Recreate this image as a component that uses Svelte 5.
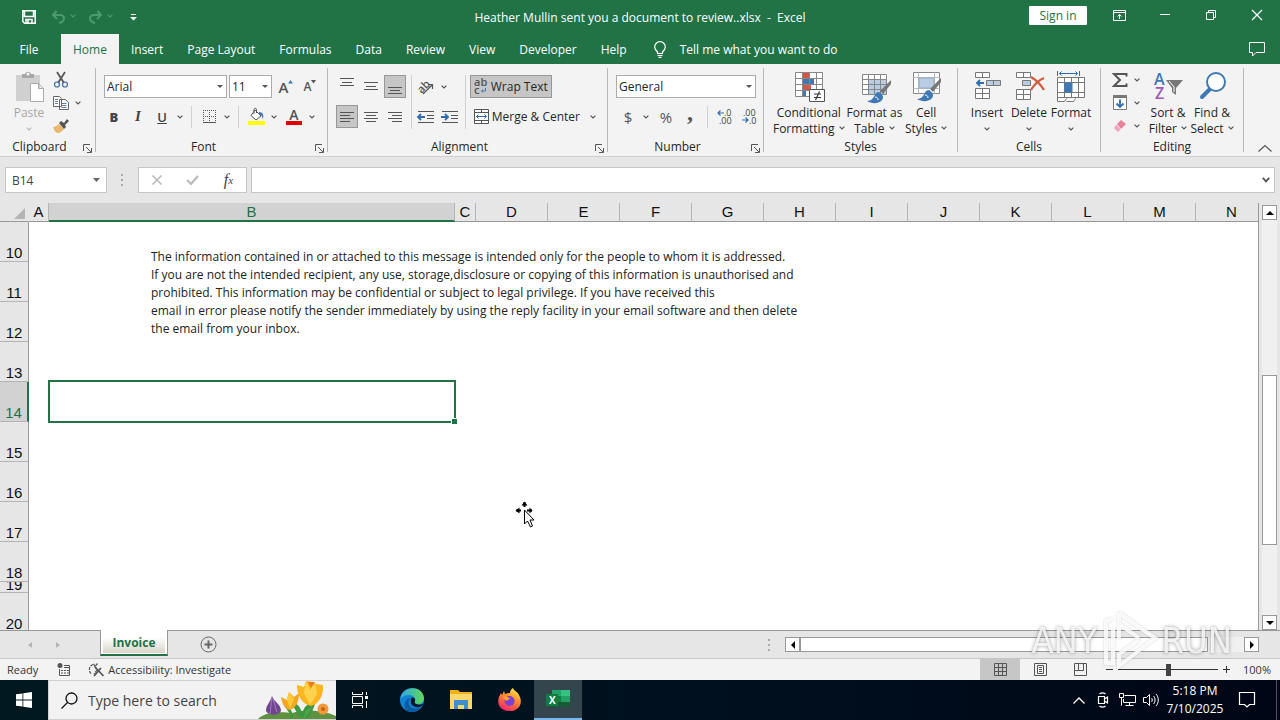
<script lang="ts">
  type Align = { id: string; lines: number[][]; on: boolean };

  let activeTab = $state('Home');
  let fontName = $state('Arial');
  let fontSize = $state('11');
  let numberFormat = $state('General');
  let cellName = $state('B14');
  let formula = $state('');
  let search = $state('');
  let zoom = $state(50);

  const tabs = ['Home', 'Insert', 'Page Layout', 'Formulas', 'Data', 'Review', 'View', 'Developer', 'Help'];

  // each line is [x1, x2, y] in a 22px box
  const vertical: Align[] = [
    { id: 'Top Align', lines: [[4, 18, 2], [6, 16, 6], [4, 18, 9]], on: false },
    { id: 'Middle Align', lines: [[4, 18, 6], [6, 16, 10], [4, 18, 13]], on: false },
    { id: 'Bottom Align', lines: [[4, 18, 11], [6, 16, 14], [4, 18, 17]], on: true }
  ];
  const horizontal: Align[] = [
    { id: 'Align Left', lines: [[4, 18, 6], [4, 14, 9], [4, 18, 12], [4, 14, 15]], on: true },
    { id: 'Center', lines: [[4, 18, 6], [6, 16, 9], [4, 18, 12], [6, 16, 15]], on: false },
    { id: 'Align Right', lines: [[4, 18, 6], [8, 18, 9], [4, 18, 12], [8, 18, 15]], on: false }
  ];

  const columns = ['A', 'B', 'C', 'D', 'E', 'F', 'G', 'H', 'I', 'J', 'K', 'L', 'M', 'N'];
  const rows = [10, 11, 12, 13, 14, 15, 16, 17, 18, 19, 20];

  const message = [
    'The information contained in or attached to this message is intended only for the people to whom it is addressed.',
    'If you are not the intended recipient, any use, storage,disclosure or copying of this information is unauthorised and',
    'prohibited. This information may be confidential or subject to legal privilege. If you have received this',
    'email in error please notify the sender immediately by using the reply facility in your email software and then delete',
    'the email from your inbox.'
  ];
</script>

{#snippet chev()}
  <svg class="chev" width="6" height="4" viewBox="0 0 6 4"><path d="M.6.6 3 3 5.400.6" fill="none" stroke="currentColor" stroke-width="1.200" /></svg>
{/snippet}

{#snippet more(label: string)}
  <button class="more" aria-label={label}>{@render chev()}</button>
{/snippet}

{#snippet launcher(label: string)}
  <button class="launcher" aria-label={label}>
    <svg width="9" height="9" viewBox="0 0 9 9" fill="none" stroke="#555"><path d="M.5 7V.5H7M3 3l5 5M8.500 4v4.500H4" /></svg>
  </button>
{/snippet}

{#snippet alignButton(a: Align)}
  <button class="tool" class:on={a.on} aria-label={a.id}>
    <svg width="22" height="22" viewBox="0 0 22 22" stroke="#555" shape-rendering="crispEdges">
      {#each a.lines as [x1, x2, y]}
        <line {x1} {x2} y1={y + 0.5} y2={y + 0.5} />
      {/each}
    </svg>
  </button>
{/snippet}

{#snippet brush()}
  <path d="M31 7 20 18l3 3 8-10z" fill="#777" />
  <path d="M19 19c-4 0-4 4-6 6-1 2-4 3-6 3 5 3 12 3 15-1 2-3 1-5-3-8z" fill="#3f78b5" />
  <path d="M15 24c2 0 3 1 3 3" stroke="#fff" fill="none" />
{/snippet}

<div class="window">
  <header class="title-bar">
    <div class="quick">
      <button aria-label="Save">
        <svg width="14" height="14" viewBox="0 0 14 14" fill="none" stroke="#fff" stroke-width="1.500"><path d="M.8.8h12.400v12.400H2.500L.8 11.500zM2.500 1v5.500h9V1M4 13V9.500h6V13M6 10v3" /></svg>
      </button>
      <button class="dim" aria-label="Undo">
        <svg width="15" height="14" viewBox="0 0 15 14" fill="none" stroke="currentColor" stroke-width="2"><path d="M5.500 1 2 5l4 4M2 5h7c6 0 5 7-1 8" /></svg>
      </button>
      <span class="dim gap">{@render chev()}</span>
      <button class="dim" aria-label="Redo">
        <svg width="15" height="14" viewBox="0 0 15 14" fill="none" stroke="currentColor" stroke-width="2"><path d="m9.500 1 3.500 4-4 4M13 5H6C0 5 1 12 7 13" /></svg>
      </button>
      <span class="dim gap">{@render chev()}</span>
      <button aria-label="Customize Quick Access Toolbar">
        <svg width="7" height="7" viewBox="0 0 7 7" fill="#fff"><path d="M1 0h5v1H1zM0 3h7L3.500 6.500z" /></svg>
      </button>
    </div>
    <h1>Heather Mullin sent you a document to review..xlsx&nbsp; -&nbsp; Excel</h1>
    <div class="caption">
      <button class="sign-in">Sign in</button>
      <button aria-label="Ribbon Display Options">
        <svg width="13" height="11" viewBox="0 0 13 11" fill="none" stroke="#fff"><path d="M.5.5h12v10H.5zM.5 2.500h12M6.500 9V4.500M4.500 6.500l2-2 2 2" /></svg>
      </button>
      <button aria-label="Minimize"><svg width="10" height="10" viewBox="0 0 10 10"><path d="M0 4.500h10" stroke="#fff" /></svg></button>
      <button aria-label="Restore Down">
        <svg width="10" height="10" viewBox="0 0 10 10" fill="none" stroke="#fff"><path d="M.5 2.500h7v7h-7zM2.500 2V.5h7v7H8" /></svg>
      </button>
      <button aria-label="Close"><svg width="10" height="10" viewBox="0 0 10 10"><path d="m0 0 10 10M10 0 0 10" stroke="#fff" stroke-width="1.200" /></svg></button>
    </div>
  </header>

  <nav class="tabs">
    <button class="file">File</button>
    {#each tabs as tab}
      <button class:active={tab === activeTab} onclick={() => (activeTab = tab)}>{tab}</button>
    {/each}
    <button class="tell">
      <svg width="12" height="17" viewBox="0 0 12 17" fill="none" stroke="#fff" stroke-width="1.200"><path d="M3.500 12.500V11C2 9.500.7 8 .7 6a5.300 5.300 0 0 1 10.600 0c0 2-1.300 3.500-2.800 5v1.500zM3.500 14.500h5M4.500 16.400h3" /></svg>
      Tell me what you want to do
    </button>
    <button class="comments" aria-label="Comments">
      <svg width="16" height="15" viewBox="0 0 16 15" fill="none" stroke="#fff"><path d="M.5.5h15v10H7L3.500 14v-3.500h-3z" /></svg>
    </button>
  </nav>

  <div class="ribbon">
    <section class="group clipboard">
      <div class="body">
        <button class="big paste">
          <svg width="32" height="32" viewBox="0 0 32 32">
            <path d="M3 4h24v26H3z" fill="#d0d0d0" /><path d="M9 3h3c1-3 5-3 6 0h3v4H9z" fill="#a6a6a6" /><circle cx="15" cy="3" r="1.500" fill="#f3f3f3" />
            <path d="M17.500 12.500h8l5 5v13h-13zM25.500 12.500v5h5" fill="#fff" stroke="#aaa" />
          </svg>
          <span>Paste</span>{@render chev()}
        </button>
        <div class="stack">
          <div class="row">
            <button class="icon" aria-label="Cut">
              <svg width="16" height="16" viewBox="0 0 16 16" fill="none"><path d="m4 0 7 11M12 0 5 11" stroke="#555" stroke-width="1.800" /><circle cx="4" cy="12.500" r="2.500" stroke="#3a6ea5" stroke-width="1.200" /><circle cx="12" cy="12.500" r="2.500" stroke="#3a6ea5" stroke-width="1.200" /></svg>
            </button>
          </div>
          <div class="row">
            <button class="icon" aria-label="Copy">
              <svg width="16" height="14" viewBox="0 0 16 14" fill="#fff" stroke="#666"><path d="M.5.5h6l2 2v8h-8zM6.500 3.500h6l3 3v7h-9z" /><path d="M2 3.500h3M2 5.500h3M2 7.500h3M8.500 7.500h5M8.500 9.500h5M8.500 11.500h5" stroke="#5b7fa8" /></svg>
            </button>
            {@render more('Copy options')}
          </div>
          <div class="row">
            <button class="icon" aria-label="Format Painter">
              <svg width="16" height="14" viewBox="0 0 16 14"><path d="M0 8c3 0 4-2 6-3l5 5c-2 2-3 4-7 4-2-1-3-3-4-6z" fill="#eab86c" /><path d="m6 4 2-2 3 2 3-4 2 2-4 4 1 2-2 2z" fill="#555" /></svg>
            </button>
          </div>
        </div>
      </div>
      <div class="foot wide"><h2>Clipboard</h2>{@render launcher('Clipboard settings')}</div>
    </section>

    <section class="group font">
      <div class="body rows">
        <div class="row">
          <label class="combo name"><select aria-label="Font" bind:value={fontName}><option>Arial</option></select><i></i></label>
          <label class="combo size"><select aria-label="Font Size" bind:value={fontSize}><option>11</option></select><i></i></label>
          <button class="tool grow" aria-label="Increase Font Size">A<svg width="5" height="4" viewBox="0 0 5 4"><path d="M0 3.500h5L2.500 0z" fill="#3f78b5" /></svg></button>
          <button class="tool grow small" aria-label="Decrease Font Size">A<svg width="5" height="4" viewBox="0 0 5 4"><path d="M0 0h5L2.500 3.500z" fill="#555" /></svg></button>
        </div>
        <div class="row">
          <button class="tool glyph"><b>B</b></button>
          <button class="tool glyph italic">I</button>
          <button class="tool glyph underline">U</button>
          {@render more('Underline options')}
          <span class="sep"></span>
          <button class="tool" aria-label="Borders">
            <svg width="13" height="13" viewBox="0 0 13 13" fill="none" stroke="#555" shape-rendering="crispEdges"><path d="M.5 0v12M6.500 0v12M12.500 0v12M0 .5h12M0 6.500h12" stroke-dasharray="1 1" /><path d="M0 12.500h13" /></svg>
          </button>
          {@render more('Border options')}
          <span class="sep"></span>
          <button class="tool" aria-label="Fill Color">
            <svg width="17" height="17" viewBox="0 0 17 17"><path d="m7 2 6 6-5 4-5-4.500z" fill="#fff" stroke="#555" /><path d="M6 6V1.500c0-1.500 2.500-1.500 2.500 0V5" fill="none" stroke="#555" /><path d="M11 4c4 0 5 3 4 7-1-2-1-4-4-5z" fill="#3f78b5" /><path d="M0 13h17v4H0z" fill="#ff0" /></svg>
          </button>
          {@render more('Fill colors')}
          <button class="tool color-a" aria-label="Font Color">A<i></i></button>
          {@render more('Font colors')}
        </div>
      </div>
      <div class="foot wide"><h2>Font</h2>{@render launcher('Font settings')}</div>
    </section>

    <section class="group alignment">
      <div class="body">
        <div class="rows">
          <div class="row">{#each vertical as a}{@render alignButton(a)}{/each}</div>
          <div class="row">{#each horizontal as a}{@render alignButton(a)}{/each}</div>
        </div>
        <span class="sep tall"></span>
        <div class="rows indent">
          <div class="row">
            <button class="tool" aria-label="Orientation">
              <svg width="18" height="16" viewBox="0 0 18 16"><text x="0" y="12" transform="rotate(-45 6 8)" font-size="11" font-weight="600" fill="#555">ab</text><path d="m6 15 9-9M11 5.500h4.500V10" fill="none" stroke="#555" stroke-width="1.200" /></svg>
            </button>
            {@render more('Orientation options')}
          </div>
          <div class="row">
            <button class="tool" aria-label="Decrease Indent">
              <svg width="17" height="14" viewBox="0 0 17 14" fill="none" stroke="#555"><path d="M1 1.500h16M10 5.500h7M10 8.500h7M1 12.500h16" /><path d="M8 7H1M4 4 1 7l3 3" stroke="#2f6cb0" stroke-width="1.800" /></svg>
            </button>
            <button class="tool" aria-label="Increase Indent">
              <svg width="17" height="14" viewBox="0 0 17 14" fill="none" stroke="#555"><path d="M1 1.500h16M10 5.500h7M10 8.500h7M1 12.500h16" /><path d="M0 7h7M4 4l3 3-3 3" stroke="#2f6cb0" stroke-width="1.800" /></svg>
            </button>
          </div>
        </div>
        <span class="sep tall"></span>
        <div class="rows">
          <div class="row">
            <button class="tool text on">
              <svg width="14" height="17" viewBox="0 0 14 17" font-size="11" font-weight="600" fill="#555"><text x="0" y="8">ab</text><text x="0" y="16">c</text><path d="M11.500 10v3H7.500M9 11.500 7.500 13 9 14.500" fill="none" stroke="#3f78b5" /></svg>
              Wrap Text
            </button>
          </div>
          <div class="row">
            <button class="tool text">
              <svg width="15" height="15" viewBox="0 0 15 15" fill="#fff" stroke="#555"><path d="M.5.5h14v14H.5zM.5 3.500h14M.5 11.500h14M7.500.5v3M7.500 11.500v3" /><path d="M2.500 7.500h10M4.500 5.500l-2 2 2 2M10.500 5.500l2 2-2 2" fill="none" stroke="#2f6cb0" /></svg>
              Merge &amp; Center
            </button>
            {@render more('Merge options')}
          </div>
        </div>
      </div>
      <div class="foot wide"><h2>Alignment</h2>{@render launcher('Alignment settings')}</div>
    </section>

    <section class="group number">
      <div class="body rows">
        <div class="row">
          <label class="combo format"><select aria-label="Number Format" bind:value={numberFormat}><option>General</option></select><i></i></label>
        </div>
        <div class="row">
          <button class="tool sign">$</button>
          {@render more('Accounting formats')}
          <button class="tool sign percent">%</button>
          <button class="tool sign comma">,</button>
          <span class="sep"></span>
          <button class="tool" aria-label="Increase Decimal">
            <svg width="16" height="15" viewBox="0 0 16 15" font-size="9" fill="#444"><text x="7" y="7">.0</text><text x="2" y="15">.00</text><path d="M7 4H1M3.500 1.500 1 4l2.500 2.500" fill="none" stroke="#2f6cb0" stroke-width="1.200" /></svg>
          </button>
          <button class="tool" aria-label="Decrease Decimal">
            <svg width="16" height="15" viewBox="0 0 16 15" font-size="9" fill="#444"><text x="2" y="7">.00</text><text x="8" y="15">.0</text><path d="M1 11h6M4.500 8.500 7 11l-2.500 2.500" fill="none" stroke="#2f6cb0" stroke-width="1.200" /></svg>
          </button>
        </div>
      </div>
      <div class="foot wide"><h2>Number</h2>{@render launcher('Number settings')}</div>
    </section>

    <section class="group styles">
      <div class="body">
        <button class="big cond">
          <svg width="32" height="32" viewBox="0 0 32 32">
            <path d="M2.500 1.500h27v24h-27z" fill="#fff" /><path d="M9 2h7v6H9zM9 14h9v6H9z" fill="#d65442" /><path d="M9 8h12v6H9zM9 20h4v6H9z" fill="#3f78b5" />
            <path d="M2.500 1.500h27v24h-27zM2.500 7.500h27M2.500 13.500h27M2.500 19.500h27M9.500 1.500v24M16.500 1.500v24M23.500 1.500v24" fill="none" stroke="#888" />
            <path d="M16.500 18.500h15v12h-15z" fill="#fff" stroke="#555" /><path d="M21 23h7M21 26.500h7M26.500 20.500l-4 8.500" stroke="#333" stroke-width="1.200" />
          </svg>
          <span>Conditional<br />Formatting {@render chev()}</span>
        </button>
        <button class="big">
          <svg width="32" height="32" viewBox="0 0 32 32"><path d="M4.500 3.500h24v20h-24z" fill="#fff" /><path d="M10 9h18v14H10z" fill="#b9cde2" /><path d="M4.500 3.500h24v20h-24zM4.500 8.500h24M4.500 13.500h24M4.500 18.500h24M10.500 3.500v20M16.500 3.500v20M22.500 3.500v20" fill="none" stroke="#888" /><g transform="translate(2 2)">{@render brush()}</g></svg>
          <span>Format as<br />Table {@render chev()}</span>
        </button>
        <button class="big narrow">
          <svg width="32" height="32" viewBox="0 0 32 32"><path d="M3.500 1.500h26v21h-26z" fill="#fff" stroke="#888" /><path d="M3.500 6.500h26M3.500 17.500h26M8.500 1.500v21M24.500 1.500v21" stroke="#bbb" /><path d="M9 7h15v10H9z" fill="#b9cde2" stroke="#8faac6" />{@render brush()}</svg>
          <span>Cell<br />Styles {@render chev()}</span>
        </button>
      </div>
      <div class="foot"><h2>Styles</h2></div>
    </section>

    <section class="group cells">
      <div class="body">
        <button class="big narrow">
          <svg width="32" height="32" viewBox="0 0 32 32" fill="#fff" stroke="#777"><path d="M4.500 1.500h14v5h-14zM11.500 1.500v5M4.500 17.500h14v10h-14zM4.500 22.500h14M11.500 17.500v10" /><path d="M15.500 9.500h14v5h-14zM22.500 9.500v5" fill="#b9cde2" /><path d="M13 12H6M9 9l-3 3 3 3" fill="none" stroke="#2f6cb0" stroke-width="1.800" /></svg>
          <span>Insert</span>{@render chev()}
        </button>
        <button class="big narrow">
          <svg width="32" height="32" viewBox="0 0 32 32" fill="#fff" stroke="#777"><path d="M3.500 1.500h14v5h-14zM10.500 1.500v5M3.500 18.500h14v10h-14zM3.500 23.500h14M10.500 18.500v10" /><path d="M9.500 9.500h8v5h-8z" fill="#b9cde2" /><path d="M18 6c5 3 10 8 13 13M31 7c-5 2-10 7-13 12" fill="none" stroke="#d05a3c" stroke-width="2.200" /></svg>
          <span>Delete</span>{@render chev()}
        </button>
        <button class="big narrow">
          <svg width="32" height="32" viewBox="0 0 32 32" fill="#fff" stroke="#777"><path d="M2.500 6.500h27v20h-27zM2.500 11.500h27M2.500 21.500h27M9.500 6.500v20M16.500 6.500v20M23.500 6.500v20M2.500 26.500v4h7l2-3M11.500 30.500h7l2-3" /><path d="M10 12h7v9h-7z" fill="#3f78b5" stroke="#3f78b5" /><path d="M2.500 0v5M24.500 0v5M4 2.500h19M6.500.5l-2 2 2 2M20.500.5l2 2-2 2" fill="none" stroke="#2f6cb0" /></svg>
          <span>Format</span>{@render chev()}
        </button>
      </div>
      <div class="foot"><h2>Cells</h2></div>
    </section>

    <section class="group editing">
      <div class="body">
        <div class="stack">
          <div class="row">
            <button class="icon" aria-label="AutoSum"><svg width="16" height="14" viewBox="0 0 16 14"><path d="M14.500 3.500V1H2l6 6-6 6h12.500v-2.500" fill="none" stroke="#555" stroke-width="2" /></svg></button>{@render more('AutoSum options')}
          </div>
          <div class="row">
            <button class="icon" aria-label="Fill"><svg width="14" height="15" viewBox="0 0 14 15"><path d="M.5.5h13v14H.5z" fill="#fff" stroke="#777" /><path d="M0 0h14v3H0z" fill="#777" /><path d="M7 4.500V12M3.500 8.500 7 12l3.500-3.500" fill="none" stroke="#2f6cb0" stroke-width="1.800" /></svg></button>{@render more('Fill options')}
          </div>
          <div class="row">
            <button class="icon" aria-label="Clear"><svg width="14" height="14" viewBox="0 0 14 14"><path d="m8 1 5 4-5 5-4-5z" fill="#e8829b" /><path d="m3.500 5.500 4 5L5 13 1 9z" fill="#f0a5b6" /></svg></button>{@render more('Clear options')}
          </div>
        </div>
        <button class="big narrow">
          <svg width="32" height="32" viewBox="0 0 32 32" font-size="16" font-weight="600"><text x="2" y="14" fill="#3f78b5">A</text><text x="3" y="28" fill="#9b59b6">Z</text><path d="M14 9h17l-7 8v7l-4-3v-4z" fill="#777" /><path d="m17 10 5 6v5" fill="none" stroke="#fff" /></svg>
          <span>Sort &amp;<br />Filter {@render chev()}</span>
        </button>
        <button class="big narrow">
          <svg width="32" height="32" viewBox="0 0 32 32"><path d="m15 17-9 9" stroke="#3f78b5" stroke-width="4" stroke-linecap="round" /><circle cx="20" cy="11" r="9" fill="#fff" stroke="#3f78b5" stroke-width="2" /></svg>
          <span>Find &amp;<br />Select {@render chev()}</span>
        </button>
      </div>
      <div class="foot"><h2>Editing</h2></div>
    </section>

    <button class="collapse" aria-label="Collapse the Ribbon"><svg width="14" height="8" viewBox="0 0 14 8"><path d="m.5 7.500 6.500-6 6.500 6" fill="none" stroke="#555" stroke-width="1.200" /></svg></button>
  </div>

  <div class="formula-bar">
    <div class="name-box">
      <input aria-label="Name Box" bind:value={cellName} />
      <button aria-label="Names"><svg width="7" height="4" viewBox="0 0 7 4"><path d="M0 0h7L3.500 4z" fill="#666" /></svg></button>
    </div>
    <span class="dots"></span>
    <div class="fx">
      <button aria-label="Cancel"><svg width="10" height="10" viewBox="0 0 10 10"><path d="m.5.5 9 9m0-9-9 9" stroke="#bbb" stroke-width="1.600" /></svg></button>
      <button aria-label="Enter"><svg width="13" height="10" viewBox="0 0 13 10"><path d="m1 5 4 4 7-8" fill="none" stroke="#bbb" stroke-width="2.200" /></svg></button>
      <button class="fn" aria-label="Insert Function">f<sub>x</sub></button>
    </div>
    <div class="formula">
      <input aria-label="Formula Bar" bind:value={formula} />
      <button aria-label="Expand Formula Bar"><svg width="8" height="6" viewBox="0 0 8 6"><path d="m.8.8 3.200 3.500L7.200.8" fill="none" stroke="#555" stroke-width="1.800" /></svg></button>
    </div>
  </div>

  <main class="sheet">
    <div class="grid">
      <table>
        <colgroup>
          <col class="c-head" /><col class="c-a" /><col class="c-b" /><col class="c-c" />
          {#each columns.slice(3) as c (c)}<col class="c-std" />{/each}
        </colgroup>
        <thead>
          <tr>
            <th class="corner"><svg width="11" height="11" viewBox="0 0 11 11"><path d="M11 0v11H0z" fill="#b4b4b4" /></svg></th>
            {#each columns as c}<th scope="col" class:sel={c === 'B'}>{c}</th>{/each}
          </tr>
        </thead>
        <tbody>
          {#each rows as r}
            <tr class:short={r === 19}>
              <th scope="row" class:sel={r === 14}><span>{r}</span></th>
              {#each columns as c}
                <td>
                  {#if r === 10 && c === 'B'}
                    <p class="note">{#each message as line}<span>{line}</span>{/each}</p>
                  {/if}
                  {#if r === 14 && c === 'B'}<div class="selection"></div>{/if}
                </td>
              {/each}
            </tr>
          {/each}
        </tbody>
      </table>
      <svg class="cursor" width="20" height="28" viewBox="0 0 20 28"><path d="M9.500 1v5M1 9.500h5M12 9.500h5" stroke="#000" stroke-width="2" /><path d="M6.500 4.500l3-4 3 4zM4.500 6.500l-4 3 4 3zM14.500 6.500l3 3-3 3z" /><path d="M9.500 9v14l3-3 3 6 2-1-2.500-6h4z" fill="#fff" stroke="#000" /></svg>
    </div>
    <div class="vscroll">
      <button class="arrow" aria-label="Scroll up"><svg width="8" height="4" viewBox="0 0 8 4"><path d="M0 4h8L4 0z" /></svg></button>
      <div class="track"><div class="thumb"></div></div>
      <button class="arrow" aria-label="Scroll down"><svg width="8" height="4" viewBox="0 0 8 4"><path d="M0 0h8L4 4z" /></svg></button>
    </div>
  </main>

  <div class="sheet-tabs">
    <button class="nav" aria-label="Previous sheet"><svg width="4" height="6" viewBox="0 0 4 6"><path d="M4 0v6L0 3z" fill="#b5b5b5" /></svg></button>
    <button class="nav" aria-label="Next sheet"><svg width="4" height="6" viewBox="0 0 4 6"><path d="M0 0v6l4-3z" fill="#b5b5b5" /></svg></button>
    <button class="sheet-tab"><span>Invoice</span></button>
    <button class="add" aria-label="New sheet"><svg width="17" height="17" viewBox="0 0 17 17" fill="none" stroke="#666"><circle cx="8.500" cy="8.500" r="7.500" /><path d="M4.500 8.500h8M8.500 4.500v8" stroke-width="2" /></svg></button>
    <div class="hscroll">
      <span class="dots small"></span>
      <button class="arrow" aria-label="Scroll left"><svg width="4" height="8" viewBox="0 0 4 8"><path d="M4 0v8L0 4z" /></svg></button>
      <div class="track"><div class="thumb"></div></div>
      <button class="arrow" aria-label="Scroll right"><svg width="4" height="8" viewBox="0 0 4 8"><path d="M0 0v8l4-4z" /></svg></button>
    </div>
  </div>

  <footer class="status">
    <span class="ready">Ready</span>
    <button class="macro" aria-label="Record Macro"><svg width="13" height="13" viewBox="0 0 13 13" fill="none" stroke="#555"><path d="M2.500 6v6.500h10v-10H7M7 4.500h5M4 7.500h2m1 0h2m1 0h2M4 10h2m1 0h2m1 0h2" /><circle cx="3" cy="2.500" r="2.500" fill="#555" stroke="none" /></svg></button>
    <button class="access">
      <svg width="16" height="15" viewBox="0 0 16 15" fill="none" stroke="#555"><path d="M5 2.500C1 4 0 9 3.500 12M9.500 1.500 7 4.500l-1.500-3M7 4.500 9 8l-3 4" stroke-width="1.200" stroke-dasharray="3 1" /><path d="m7 5 8.500 9M13 6l-7 8" stroke-width="1.800" /></svg>
      Accessibility: Investigate
    </button>
    <div class="views">
      <button class="view on" aria-label="Normal"><svg width="13" height="13" viewBox="0 0 13 13" fill="none" stroke="#555"><path d="M.5.5h12v12H.5zM.5 4.500h12M.5 8.500h12M4.500.5v12M8.500.5v12" /></svg></button>
      <button class="view" aria-label="Page Layout view"><svg width="13" height="13" viewBox="0 0 13 13" fill="none" stroke="#555"><path d="M.5.5h12v12H.5zM3.500 2.500h6v8h-6zM5 4.500h3M5 6.500h3M5 8.500h3" /></svg></button>
      <button class="view" aria-label="Page Break Preview"><svg width="13" height="13" viewBox="0 0 13 13" fill="none" stroke="#555"><path d="M.5.5h12v12H.5zM4.500.5v7M9.500.5v7h-9" /></svg></button>
    </div>
    <button class="step" aria-label="Zoom Out"><svg width="7" height="7" viewBox="0 0 7 7"><path d="M0 3.500h7" stroke="#333" /></svg></button>
    <input class="zoom" type="range" aria-label="Zoom" bind:value={zoom} />
    <button class="step" aria-label="Zoom In"><svg width="7" height="7" viewBox="0 0 7 7"><path d="M0 3.500h7M3.500 0v7" stroke="#333" /></svg></button>
    <button class="pct">100%</button>
  </footer>

  <div class="taskbar">
    <button class="task" aria-label="Start"><svg width="16" height="16" viewBox="0 0 16 16" fill="#fff"><path d="m0 2.300 6.500-.9v6.200H0zM7.300 1.300 16 0v7.600H7.300zM0 8.400h6.500v6.200L0 13.700zM7.300 8.400H16V16l-8.700-1.300z" /></svg></button>
    <label class="search">
      <svg width="17" height="17" viewBox="0 0 17 17" fill="none" stroke="#111" stroke-width="1.300"><circle cx="10.500" cy="6.500" r="5.500" /><path d="M6.500 10.500.5 16.500" /></svg>
      <input placeholder="Type here to search" aria-label="Type here to search" bind:value={search} />
      <svg class="flowers" width="80" height="39" viewBox="0 0 80 39">
        <path d="M2 39c8-8 24-7 34-6 14-5 34-2 44 3v3z" fill="#5f9140" />
        <path d="M36 38c0-7-3-9-7-12M47 37c0-8 4-11 8-14M44 37c-2-7-6-9-6-13 5 2 6 6 8 12 3-7 6-9 12-12-2 6-4 10-8 14" fill="#4ba34d" stroke="#3c963e" stroke-width="2" />
        <path d="M10 31c0-6 4-8 6-15 2 6 9 8 9 15-3 5-12 5-15 0z" fill="#70458f" /><path d="m16 17-2 17M17 19l4 13" stroke="#a77bc0" />
        <path d="M25 17l6 3 2-8 5 5 5-4c0 9-3 15-9 17-5-1-8-6-9-13z" fill="#f5a51f" /><path d="m33 12 5 7-4 10-3-9z" fill="#ffc93b" />
        <path d="M41 5l7 2 2-6 7 1 3 2 7 1c1 10-4 19-12 21-9-2-14-10-14-21z" fill="#fcb61e" /><path d="m50 1 4 9 5-8 2 12-7 11-6-12z" fill="#ffd34e" /><path d="m52 2 3 6 4-6z" fill="#e97817" />
        <circle cx="67" cy="29" r="5.500" fill="#f29a37" /><circle cx="67" cy="29" r="2" fill="#c75f15" />
      </svg>
    </label>
    <button class="task view-all" aria-label="Task View"><svg width="16" height="16" viewBox="0 0 16 16" fill="none" stroke="#fff"><path d="M.5 0v2.500h10V0M.5 16v-2.500h10V16M.5 4.500h10v7H.5zM14.500 0v3M14.500 9v7" /><path d="M13 4h3v3h-3z" fill="#fff" stroke="none" /></svg></button>
    <button class="task" aria-label="Microsoft Edge">
      <svg width="24" height="24" viewBox="0 0 24 24"><defs><linearGradient id="edgeTop"><stop stop-color="#2ba8e8" /><stop offset="1" stop-color="#62d957" /></linearGradient></defs><circle cx="12" cy="12" r="12" fill="#1382d2" /><path d="M.3 11C2-3 23-3 24 10c0 5-4 7-8 6-3-1-1-2-1-4 0-6-10-7-14.700-1z" fill="url(#edgeTop)" /><path d="M9 12c-2 6 3 11 12 7-5 8-19 6-16-4 1-4 5-6 8-4-2 0-3 0-4 1z" fill="#0c59a4" /><path d="M12 9.500c3 0 3.500 2 3 3.500-1 2 0 3 3 3.500 2 .5 4 0 5.500-1-1 2-2 3-4 3.500-7 1-11-4-7.500-9.500z" fill="#02172a" /></svg>
    </button>
    <button class="task" aria-label="File Explorer"><svg width="22" height="20" viewBox="0 0 22 20"><path d="M0 0h8l2 2h12v17H0z" fill="#f2b01e" /><path d="M0 4h22v15H0z" fill="#ffd76a" /><path d="M4 10h14v9h-4v-4H8v4H4z" fill="#3f8fd0" /></svg></button>
    <button class="task" aria-label="Firefox">
      <svg width="23" height="24" viewBox="0 0 23 24"><defs><linearGradient id="fox" x1=".8" y1="0" x2=".3" y2="1"><stop stop-color="#fff14a" /><stop offset=".45" stop-color="#ff8a2a" /><stop offset="1" stop-color="#f5246f" /></linearGradient></defs><path d="M3 5l1 2 2-4 1 3c2-1 4-1 5-1 0-2 1-4 3-5 1 3 5 4 6 7 5 9-1 16-9 16S-1 18 .5 11C1 8 2 7 3 5z" fill="url(#fox)" /><circle cx="11.500" cy="13" r="5" fill="#7b3fd3" /><path d="M5 9c3-2 4 1 7 1-1 2-3 2-4 3z" fill="#ffa02e" /></svg>
    </button>
    <button class="task current" aria-label="Excel">
      <svg width="24" height="20" viewBox="0 0 24 20"><path d="M6 1h9v6H6z" fill="#21a366" /><path d="M15 1h9v6h-9z" fill="#33c481" /><path d="M6 7h9v6H6z" fill="#107c41" /><path d="M15 7h9v6h-9z" fill="#21a366" /><path d="M6 13h18v5H6z" fill="#185c37" /><path d="M0 5h12v12H0z" fill="#107c41" /><text x="3" y="15" font-size="10" font-weight="700" fill="#fff">X</text></svg>
    </button>
    <div class="tray">
      <button aria-label="Show hidden icons"><svg width="12" height="7" viewBox="0 0 12 7"><path d="m.5 6.500 5.500-5.500 5.500 5.500" fill="none" stroke="#fff" stroke-width="1.300" /></svg></button>
      <button aria-label="Meet Now"><svg width="12" height="16" viewBox="0 0 12 16" fill="none" stroke="#fff"><path d="M1.500 4.500h6v7h-6zM7.500 7l3-2v6l-3-2M2.500 2c2-1.500 4-1.500 6 0M2.500 14c2 1.500 4 1.500 6 0" stroke-width="1.200" /></svg></button>
      <button aria-label="Network"><svg width="17" height="14" viewBox="0 0 17 14" fill="none" stroke="#fff"><path d="M5.500 2.500h11v7h-12V6M10.500 9.500v3M6.500 12.500h8M.5.500h4v4h-4zM2.500 4.500v8" /></svg></button>
      <button aria-label="Volume"><svg width="17" height="14" viewBox="0 0 17 14" fill="none" stroke="#fff"><path d="M.5 4.500h3l3-3v11l-3-3h-3zM8.500 5c1 1 1 3 0 4M10.500 3c2 2 2 6 0 8M13 1c3 3 3 9 0 12" /></svg></button>
      <time>5:18 PM<br />7/10/2025</time>
      <button class="notes" aria-label="Notifications"><svg width="16" height="16" viewBox="0 0 16 16" fill="none" stroke="#fff"><path d="M.5.5h15v12h-5L8 15l-2.500-2.500h-5z" stroke-width="1.200" /></svg></button>
      <span class="peek"></span>
    </div>
  </div>

  <div class="watermark" aria-hidden="true">
    <span>ANY</span>
    <svg width="56" height="66" viewBox="0 0 56 66" fill="none" stroke="#fff" stroke-width="4" opacity=".85"><path d="M17 5v26M17 5l36 25-36 28V46l20-14M17 16l20 14M11 11l-7 2v42h7V20" /></svg>
    <span>RUN</span>
  </div>
</div>

<style>
  :global(body) {
    margin: 0;
    font-family: 'Open Sans', 'Segoe UI', sans-serif;
    font-size: 12px;
    color: #262626;
  }
  button, input, select {
    font: inherit;
    color: inherit;
    background: none;
    border: 0;
    border-radius: 0;
    margin: 0;
    padding: 0;
    outline: none;
    box-sizing: border-box;
  }
  button {
    display: inline-flex;
    align-items: center;
    justify-content: center;
    white-space: nowrap;
  }
  svg { flex: none; overflow: visible; }
  h1, h2, p { margin: 0; font-size: 12px; font-weight: 400; }
  .window {
    position: relative;
    display: flex;
    flex-direction: column;
    height: 100vh;
    min-height: 480px;
    overflow: hidden;
    background: #e6e6e6;
  }

  .title-bar {
    display: grid;
    grid-template-columns: 1fr auto 1fr;
    align-items: center;
    height: 34px;
    background: #217346;
    color: #fff;
  }
  .quick { display: flex; align-items: center; padding-left: 22px; gap: 12px; }
  .quick button:nth-child(2) { margin-left: 3px; }
  .quick .gap { display: flex; margin-left: -9px; }
  .quick button:last-child { margin-left: 5px; }
  .dim { color: #4f9970; }
  .caption { display: flex; justify-content: flex-end; height: 30px; align-items: center; align-self: start; }
  .caption button { width: 46px; height: 30px; }
  .caption .sign-in {
    width: 58px;
    height: 19px;
    margin-right: 9px;
    background: #fff;
    color: #217346;
    border-radius: 1px;
  }

  .tabs { display: flex; height: 30px; background: #217346; color: #fff; }
  .tabs button { padding: 0 12px; }
  .tabs .file { width: 58px; margin-right: 3px; }
  .tabs .active { background: #f3f3f3; color: #217346; }
  .tabs .tell { gap: 14px; margin-left: 3px; }
  .tabs .comments { margin-left: auto; margin-right: 3px; }

  .ribbon {
    display: flex;
    height: 93px;
    box-sizing: border-box;
    background: #f3f3f3;
    border-bottom: 1px solid #cfcfcf;
  }
  .group {
    display: flex;
    flex-direction: column;
    margin: 4px 0;
    padding: 0 8px;
    border-right: 1px solid #b8b8b8;
    box-sizing: border-box;
    position: relative;
  }
  .clipboard { width: 96px; }
  .font { width: 232px; }
  .alignment { width: 280px; }
  .number { width: 156px; }
  .styles { width: 194px; }
  .cells { width: 143px; }
  .editing { width: 143px; }
  .group .body { display: flex; flex: 1; align-items: flex-start; }
  .body.rows, .rows { display: flex; flex-direction: column; gap: 7px; padding-top: 7px; }
  .row { display: flex; align-items: center; height: 23px; }
  .foot { display: flex; align-items: center; justify-content: center; height: 10px; line-height: 10px; }
  .foot.wide { padding-right: 16px; }
  .launcher { position: absolute; right: 2px; bottom: -3px; width: 12px; height: 14px; }
  .more { width: 12px; height: 22px; color: #555; }
  .tool { width: 24px; height: 22px; }
  .icon { width: 22px; height: 22px; }
  .on { background: #c6c6c6; box-shadow: inset 0 0 0 1px #979797; }
  .sep { width: 1px; height: 22px; margin: 0 5px; background: #d0d0d0; }
  .sep.tall { height: 54px; margin: 7px 4px 0; }

  .big {
    flex-direction: column;
    justify-content: flex-start;
    width: 58px;
    padding-top: 3px;
    line-height: 16px;
  }
  .big span { padding-top: 2px; }
  .big > .chev { margin-top: 6px; }
  .big.narrow { width: 42px; }
  .big.cond { width: 74px; }
  .big .chev, .more { color: #555; }
  span .chev { margin: 0 0 3px 1px; }
  .clipboard .body { margin-left: -2px; }
  .clipboard .paste { width: 46px; color: #a6a6a6; }
  .clipboard .paste .chev { color: #bbb; }
  .clipboard .stack { margin-left: -2px; }

  .combo { position: relative; display: flex; height: 23px; margin-right: 2px; }
  .combo select {
    appearance: none;
    width: 100%;
    padding: 0 2px;
    background: #fff;
    border: 1px solid #ababab;
  }
  .combo i {
    position: absolute;
    right: 4px;
    top: 10px;
    border: 3px solid transparent;
    border-top-color: #555;
    border-bottom: 0;
  }
  .combo.name { width: 123px; }
  .combo.size { width: 43px; }
  .combo.format { width: 140px; }
  .grow { font-size: 15px; color: #555; font-weight: 600; }
  .grow svg { align-self: flex-start; margin-top: 4px; }
  .grow.small { font-size: 12px; }
  .font .rows > .row:last-child { margin-left: -2px; }
  .glyph { font-size: 13px; font-weight: 600; color: #444; }
  .italic { font-family: 'Liberation Serif', serif; font-style: italic; font-size: 15px; }
  .underline { text-decoration: underline; }
  .color-a { flex-direction: column; font-size: 14px; line-height: 12px; font-weight: 600; color: #555; margin-left: 2px; }
  .color-a i { width: 16px; height: 4px; background: #e00000; }

  .alignment .sep.tall { margin-left: 3px; }
  .alignment .row > .on, .alignment .rows:first-child .tool { width: 22px; margin-right: 2px; height: 23px; }
  .indent { width: 52px; margin-left: -2px; }
  .alignment .text, .alignment .row > .text.on { width: auto; padding: 0 4px; gap: 3px; margin: 0; }
  .alignment .text + .more { margin-left: 3px; }
  .sign { font-size: 15px; color: #555; }
  .percent { margin-left: 2px; }
  .comma { font-family: 'Liberation Serif', serif; font-weight: 700; font-size: 24px; line-height: 10px; padding-bottom: 10px; }

  .cells .body { justify-content: center; }
  .styles .big.narrow { width: 46px; }
  .editing .big.narrow { width: 44px; }
  .editing .stack { margin-right: 3px; }
  .collapse { margin: auto 8px 4px auto; }

  .formula-bar { display: flex; align-items: center; height: 26px; padding: 10px 5px; }
  .name-box, .fx, .formula {
    display: flex;
    align-items: center;
    height: 26px;
    background: #fff;
    border: 1px solid #c6c6c6;
    box-sizing: border-box;
  }
  .name-box { width: 102px; }
  .name-box input { flex: 1; min-width: 0; padding-left: 6px; color: #444; }
  .name-box button { width: 19px; }
  .dots { width: 2px; height: 12px; margin: 0 15px 0 14px; background: repeating-linear-gradient(#aaa 0 2px, transparent 2px 5px); }
  .fx { width: 109px; justify-content: center; gap: 12px; margin-right: 4px; }
  .fx button { width: 24px; }
  .fx .fn { font-family: 'Liberation Serif', serif; font-style: italic; font-size: 16px; color: #444; }
  .fn sub { font-size: 11px; vertical-align: baseline; }
  .formula { flex: 1; }
  .formula input { flex: 1; min-width: 0; }
  .formula button { width: 16px; }

  .sheet { display: flex; flex: 1; min-height: 0; }
  .grid { position: relative; flex: 1; min-width: 0; overflow: hidden; border-right: 1px solid #999; }
  table {
    table-layout: fixed;
    width: 1268px;
    border-collapse: separate;
    border-spacing: 0;
    background: #fff;
    font-family: 'Liberation Sans', Arial, sans-serif;
    font-size: 15px;
  }
  .c-head { width: 29px; }
  .c-a { width: 20px; }
  .c-b { width: 406px; }
  .c-c { width: 21px; }
  .c-std { width: 72px; }
  th, td { padding: 0; font-weight: 400; }
  th { background: #e6e6e6; color: #111; box-sizing: border-box; }
  thead th { height: 19px; line-height: 18px; border-bottom: 1px solid #999; border-right: 1px solid #b4b4b4; }
  thead th.corner { text-align: right; border-right-color: transparent; }
  .corner svg { display: block; margin: 3px 3px 0 auto; }
  thead .sel { background: #d2d2d2; color: #217346; border-bottom: 2px solid #217346; line-height: 17px; }
  tbody tr { height: 40px; }
  tbody th {
    height: 40px;
    padding: 0;
    vertical-align: bottom;
    line-height: 17px;
    border-right: 1px solid #999;
    border-bottom: 1px solid #b4b4b4;
  }
  tbody th span { display: block; }
  tbody .sel { background: #d2d2d2; color: #217346; border-right: 2px solid #217346; }
  .short, .short th { height: 11px; }
  .short th span { height: 10px; line-height: 5px; overflow: hidden; }
  td { position: relative; }
  .note {
    position: absolute;
    top: 26px;
    left: 102px;
    color: #222;
    font-family: 'Open Sans', sans-serif;
    font-size: 12px;
    font-weight: 500;
    line-height: 18px;
    white-space: nowrap;
  }
  .note span { display: block; }
  .selection { position: absolute; inset: -2px -1px -1px; border: 2px solid #217346; }
  .selection::after {
    content: '';
    position: absolute;
    right: -4px;
    bottom: -4px;
    width: 5px;
    height: 5px;
    background: #217346;
    border: 1px solid #fff;
  }
  .cursor { position: absolute; left: 515px; top: 298px; }

  .arrow { flex: none; width: 15px; height: 15px; background: #fff; border: 1px solid #999; }
  .vscroll { display: flex; flex-direction: column; width: 15px; padding: 2px 3px 0; }
  .vscroll .track { flex: 1; background: #f0f0f0; display: flex; flex-direction: column; }
  .vscroll .thumb { margin-top: 155px; height: 43%; background: #fff; border: 1px solid #999; box-sizing: border-box; }

  .sheet-tabs { display: flex; align-items: center; height: 27px; border-top: 1px solid #999; border-bottom: 1px solid #c6c6c6; }
  .nav { width: 28px; }
  .nav:first-child { margin-left: 16px; }
  .sheet-tab {
    align-self: flex-start;
    width: 68px;
    height: 26px;
    margin: -1px 0 0 28px;
    padding: 3px 2px 1px;
    background: #fff;
    border: solid #999;
    border-width: 0 1px;
    border-bottom: 2px solid #217346;
    color: #217346;
    font-weight: 700;
  }
  .sheet-tab span { flex: 1; line-height: 20px; background: linear-gradient(#fff 20%, #d8d5c8); }
  .add { margin-left: 32px; }
  .hscroll { display: flex; align-items: center; width: 491px; margin-left: auto; margin-right: 21px; }
  .dots.small { margin: 0 15px 0 0; flex: none; }
  .hscroll .track { flex: 1; display: flex; height: 15px; background: #f0f0f0; }
  .hscroll .thumb { width: 92%; background: #fff; border: 1px solid #999; box-sizing: border-box; }

  .status { display: flex; align-items: center; height: 21px; background: #f3f3f3; font-size: 11px; color: #333; }
  .ready { padding: 0 19px 0 7px; }
  .macro { margin-right: 18px; }
  .access { gap: 4px; }
  .views { display: flex; align-self: stretch; margin-left: auto; margin-right: 6px; }
  .view { width: 40px; }
  .view.on { box-shadow: none; }
  .zoom { appearance: none; width: 100px; height: 12px; margin: 0 5px; background: linear-gradient(#333, #333) center / 100% 1px no-repeat; }
  .zoom::-webkit-slider-thumb { appearance: none; width: 5px; height: 12px; background: #444; }
  .pct { width: 50px; padding-left: 4px; }

  .taskbar { display: flex; height: 40px; background: linear-gradient(90deg, #011820, #000f1e 60%, #000615); color: #fff; }
  .task { width: 49px; }
  .task:first-child { width: 48px; }
  .task.view-all { width: 48px; margin-right: 3px; }
  .task.current { width: 48px; background: #34454d; border-bottom: 2px solid #76b9ed; }
  .search { display: flex; align-items: center; width: 288px; padding-left: 12px; box-sizing: border-box; background: #f2f2f2; border: 1px solid #d0d0d0; border-right: 0; }
  .search input { flex: 1; min-width: 0; padding-left: 10px; font-size: 14px; color: #333; }
  .search input::placeholder { color: #444; opacity: 1; }
  .flowers { align-self: flex-end; }
  .tray { display: flex; margin-left: auto; align-items: stretch; }
  .tray button { width: 24px; }
  .tray time { width: 64px; text-align: center; line-height: 18px; padding: 2px 0; font-size: 12px; }
  .tray .notes { width: 40px; }
  .peek { margin-left: 9px; width: 3px; border-left: 1px solid #4a5560; }

  .watermark {
    position: absolute;
    right: 48px;
    bottom: 46px;
    display: flex;
    align-items: center;
    gap: 4px;
    font: 36px/50px 'Liberation Sans Narrow', 'DejaVu Sans Condensed', sans-serif;
    color: #fffc;
    text-shadow: 0 0 4px #0004;
    filter: drop-shadow(0 0 1px #0003);
    pointer-events: none;
  }
</style>
